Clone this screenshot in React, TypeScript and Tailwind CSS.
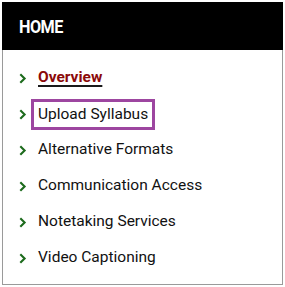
import React from "react";

const Chevron = () => (
  <svg width="8" height="11" viewBox="0 0 8 11" className="shrink-0">
    <polyline points="1.3,1.3 5.6,5.5 1.3,9.7" fill="none" stroke="#1d6b1d" strokeWidth="2.1" strokeLinecap="butt" strokeLinejoin="miter" />
  </svg>
);

export default function App() {
  const items = ["Alternative Formats", "Communication Access", "Notetaking Services", "Video Captioning"];
  return (
    <div className="m-[2px] w-[281px] h-[283px] flex flex-col" style={{ fontFamily: "Roboto, 'Liberation Sans', sans-serif" }}>
      <div className="h-[48px] bg-black flex items-center pl-[17px]">
        <span className="text-white font-bold text-[18px] tracking-[-0.6px] origin-left scale-x-[0.9] inline-block">HOME</span>
      </div>
      <ul className="flex-1 border-x border-b border-[#9a9a9a] pt-[10px]">
        <li className="h-9 flex items-center pl-[16px]">
          <Chevron />
          <span className="ml-[11px] text-[15.5px] font-bold text-[#8b0a0a] underline decoration-[#1a1a1a] underline-offset-[3px] decoration-[1.5px]">Overview</span>
        </li>
        <li className="h-9 flex items-center pl-[16px]">
          <Chevron />
          <span className="ml-[4px] border-[3px] border-[#9d46a0] px-[4px] py-[3px] text-[15.5px] text-[#111] leading-[19px]">Upload Syllabus</span>
        </li>
        {items.map((t) => (
          <li key={t} className="h-9 flex items-center pl-[16px]">
            <Chevron />
            <span className="ml-[11px] text-[15.5px] text-[#111]">{t}</span>
          </li>
        ))}
      </ul>
    </div>
  );
}
